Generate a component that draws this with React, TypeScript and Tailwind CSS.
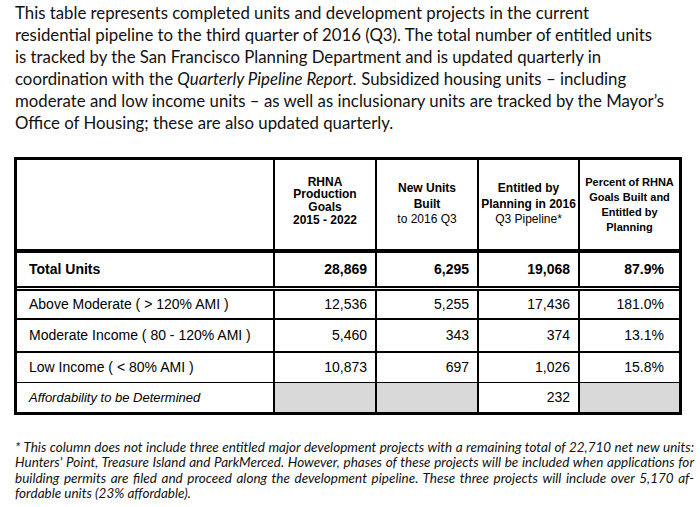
import React from "react";

const ARIAL = "font-['Liberation_Sans',Arial,sans-serif]";

function HeaderCell({ children, className = "" }: { children: React.ReactNode; className?: string }) {
  return (
    <div className={`flex flex-col items-center justify-center text-center border-l-2 border-black ${className}`}>
      {children}
    </div>
  );
}

type Row = { label: string; vals: string[]; bold?: boolean; h: string; border: string };

const rows: Row[] = [
  { label: "Total Units", vals: ["28,869", "6,295", "19,068", "87.9%"], bold: true, h: "h-[38px]", border: "border-b-[5px] border-double" },
  { label: "Above Moderate ( > 120% AMI )", vals: ["12,536", "5,255", "17,436", "181.0%"], h: "h-[29px]", border: "border-b-2" },
  { label: "Moderate Income ( 80 - 120% AMI )", vals: ["5,460", "343", "374", "13.1%"], h: "h-[33px]", border: "border-b-2" },
  { label: "Low Income ( < 80% AMI )", vals: ["10,873", "697", "1,026", "15.8%"], h: "h-[30px]", border: "border-b" },
];

export default function App() {
  return (
    <div className="w-[700px] h-[507px] bg-white overflow-hidden text-black">
      <div className="pl-[15px] pt-[2px] text-[16.8px] leading-[22px] text-[#111] font-['Lato',sans-serif]">
        <div className="whitespace-nowrap">This table represents completed units and development projects in the current</div>
        <div className="whitespace-nowrap">residential pipeline to the third quarter of 2016 (Q3). The total number of entitled units</div>
        <div className="whitespace-nowrap">is tracked by the San Francisco Planning Department and is updated quarterly in</div>
        <div className="whitespace-nowrap">coordination with the <i>Quarterly Pipeline Report.</i> Subsidized housing units – including</div>
        <div className="whitespace-nowrap">moderate and low income units – as well as inclusionary units are tracked by the Mayor’s</div>
        <div className="whitespace-nowrap">Office of Housing; these are also updated quarterly.</div>
      </div>

      <div className={`mt-[23px] ml-[14px] w-[668px] border-[3px] border-black ${ARIAL}`}>
        <div className="flex h-[93px] border-b-4 border-black">
          <div className="w-[256px]" />
          <HeaderCell className="w-[102px] text-[12px] leading-[12.7px] font-bold pb-[7px]">
            <span>RHNA</span>
            <span>Production</span>
            <span>Goals</span>
            <span>2015 - 2022</span>
          </HeaderCell>
          <HeaderCell className="w-[102px] text-[12px] leading-[15.5px]">
            <span className="font-bold">New Units</span>
            <span className="font-bold">Built</span>
            <span>to 2016 Q3</span>
          </HeaderCell>
          <HeaderCell className="w-[101px] text-[12px] leading-[15.5px]">
            <span className="font-bold">Entitled by</span>
            <span className="font-bold">Planning in 2016</span>
            <span>Q3 Pipeline*</span>
          </HeaderCell>
          <HeaderCell className="w-[101px] text-[11px] leading-[15px] font-bold">
            <span>Percent of RHNA</span>
            <span>Goals Built and</span>
            <span>Entitled by</span>
            <span>Planning</span>
          </HeaderCell>
        </div>

        {rows.map((r) => (
          <div key={r.label} className={`flex ${r.h} ${r.border} border-black text-[14px] ${r.bold ? "font-bold" : ""}`}>
            <div className="w-[256px] flex items-center pl-[12px]">{r.label}</div>
            {r.vals.map((v, i) => (
              <div
                key={i}
                className={`flex items-center justify-end border-l-2 border-black ${i < 2 ? "w-[102px]" : "w-[101px]"} ${i === 3 ? "pr-[15px]" : "pr-[8px]"}`}
              >
                {v}
              </div>
            ))}
          </div>
        ))}

        <div className="flex h-[29px] text-[13px]">
          <div className="w-[256px] flex items-center pl-[12px] italic">Affordability to be Determined</div>
          <div className="w-[102px] border-l-2 border-black bg-[#d9d9d9]" />
          <div className="w-[102px] border-l-2 border-black bg-[#d9d9d9]" />
          <div className="w-[101px] border-l-2 border-black flex items-center justify-end pr-[8px] text-[14px]">232</div>
          <div className="w-[101px] border-l-2 border-black bg-[#d9d9d9]" />
        </div>
      </div>

      <div className="mt-[25px] pl-[15px] w-[694px] text-[13.5px] leading-[15.3px] italic font-['Lato',sans-serif] text-[#111]">
        <div className="text-justify [text-align-last:justify] whitespace-nowrap">* This column does not include three entitled major development projects with a remaining total of 22,710 net new units:</div>
        <div className="text-justify [text-align-last:justify] whitespace-nowrap">Hunters' Point, Treasure Island and ParkMerced. However, phases of these projects will be included when applications for</div>
        <div className="text-justify [text-align-last:justify] whitespace-nowrap">building permits are filed and proceed along the development pipeline. These three projects will include over 5,170 af-</div>
        <div>fordable units (23% affordable).</div>
      </div>
    </div>
  );
}
